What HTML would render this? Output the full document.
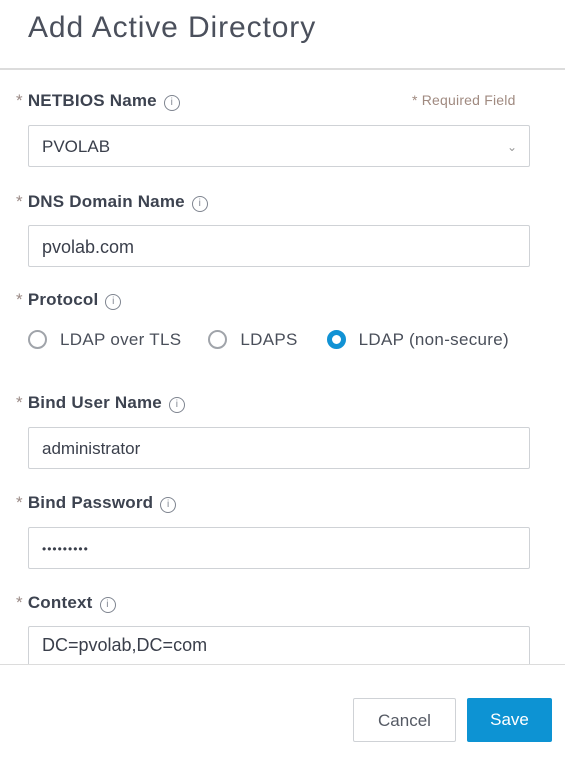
<!DOCTYPE html>
<html><head><style>
body{margin:0;width:565px;height:759px;background:#fff;font-family:"Liberation Sans",sans-serif;position:relative;overflow:hidden;color:#3f4451}
.abs{position:absolute}
.title{left:28px;top:11px;font-size:30px;color:#4b505c;letter-spacing:0.9px}
.hr{left:0;width:565px;height:2px;background:#dcdcdc}
.lbl{left:16px;font-size:17px;color:#3d4350;font-weight:bold;letter-spacing:0.2px;white-space:nowrap}
.lbl .st{color:#9a8a86;font-weight:normal;margin-right:5px}
.info{display:inline-block;width:14px;height:14px;border:1.3px solid #7f8590;border-radius:50%;font-size:10px;text-align:center;line-height:14px;color:#7f8590;font-weight:normal;margin-left:7px;vertical-align:1px}
.inp{left:28px;height:42px;border:1px solid #cfd2d6;border-radius:2px;font-size:17px;line-height:42px;padding-left:13px;box-sizing:border-box;width:502px;color:#3a3f4b}
.radio{display:inline-block;border:2px solid #a0a4aa;border-radius:50%;vertical-align:-4px;margin-right:13px;box-sizing:border-box;width:19px;height:19px}
.radio.on{border:5px solid #1192d4}
.btn{top:698px;height:44px;border-radius:2px;font-size:17px;text-align:center;line-height:44px;box-sizing:border-box}
</style></head><body>
<div class="abs title">Add Active Directory</div>
<div class="abs hr" style="top:68px"></div>

<div class="abs lbl" style="top:91px"><span class="st">*</span>NETBIOS Name<span class="info">i</span></div>
<div class="abs" style="left:412px;top:92px;font-size:14px;color:#a08a80;letter-spacing:0.2px">* Required Field</div>
<div class="abs inp" style="top:125px">PVOLAB<span style="position:absolute;right:12px;top:0;font-size:12px;color:#999">&#8964;</span></div>

<div class="abs lbl" style="top:192px"><span class="st">*</span>DNS Domain Name<span class="info">i</span></div>
<div class="abs inp" style="top:225px;font-size:18px">pvolab.com</div>

<div class="abs lbl" style="top:290px"><span class="st">*</span>Protocol<span class="info">i</span></div>
<div class="abs" style="left:28px;top:330px;font-size:17px;color:#4a4f5a;white-space:nowrap;letter-spacing:0.3px">
<span class="radio"></span>LDAP over TLS<span style="display:inline-block;width:27px"></span><span class="radio"></span>LDAPS<span style="display:inline-block;width:29px"></span><span class="radio on"></span>LDAP (non-secure)</div>

<div class="abs lbl" style="top:393px"><span class="st">*</span>Bind User Name<span class="info">i</span></div>
<div class="abs inp" style="top:427px;font-size:17px">administrator</div>

<div class="abs lbl" style="top:493px"><span class="st">*</span>Bind Password<span class="info">i</span></div>
<div class="abs inp" style="top:527px;font-size:12px;letter-spacing:1px">&#8226;&#8226;&#8226;&#8226;&#8226;&#8226;&#8226;&#8226;&#8226;</div>

<div class="abs lbl" style="top:593px"><span class="st">*</span>Context<span class="info">i</span></div>
<div class="abs inp" style="top:626px;height:50px;line-height:36px;font-size:18px">DC=pvolab,DC=com</div>
<div class="abs" style="left:0;top:664px;width:565px;height:95px;background:#fff;border-top:1px solid #dcdcdc"></div>

<div class="abs btn" style="left:353px;width:103px;border:1px solid #cfd2d6;color:#555a64;background:#fff">Cancel</div>
<div class="abs btn" style="left:467px;width:85px;background:#0d93d3;color:#fff">Save</div>
</body></html>
